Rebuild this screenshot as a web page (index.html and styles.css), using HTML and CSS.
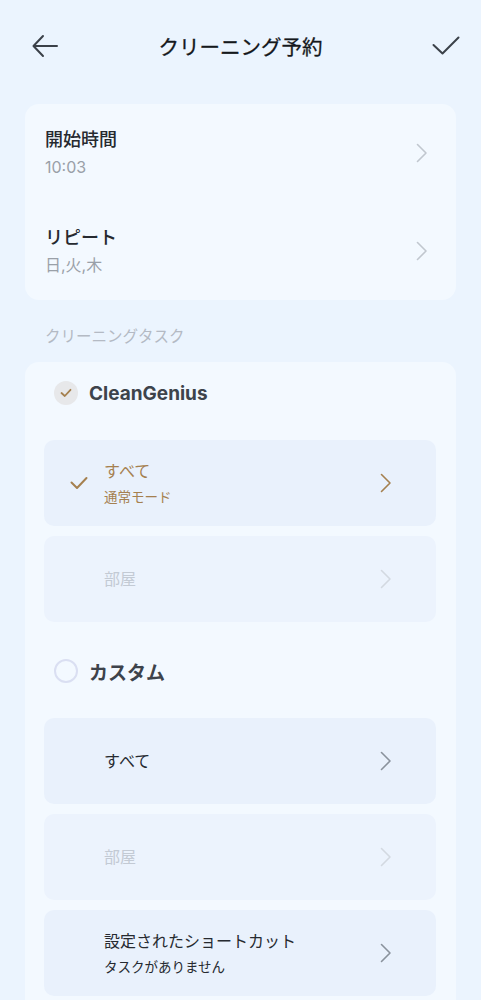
FILE: index.html
```html
<!DOCTYPE html>
<html lang="ja">
<head>
    <meta charset="UTF-8">
    <meta name="viewport" content="width=device-width, initial-scale=1.0">
    <title>クリーニング予約</title>
    <link rel="stylesheet" href="styles.css">
</head>
<body>

    <header class="topbar">
        <svg class="icon-back" width="26" height="24" viewBox="0 0 26 24">
            <path d="M25 12H2M11 2L1.5 12L11 22" fill="none" stroke="#3b4149" stroke-width="2" stroke-linecap="round" stroke-linejoin="round"/>
        </svg>
        <h1>クリーニング予約</h1>
        <svg class="icon-ok" width="28" height="20" viewBox="0 0 28 20">
            <path d="M1.5 9L10.5 17.5L26.5 1.5" fill="none" stroke="#3b4149" stroke-width="2" stroke-linecap="round" stroke-linejoin="round"/>
        </svg>
    </header>

    <!-- Horário e repetição -->
    <section class="card">
        <div class="row">
            <div class="row-text">
                <div class="row-title">開始時間</div>
                <div class="row-sub">10:03</div>
            </div>
            <svg class="chev" width="12" height="20" viewBox="0 0 12 20"><path d="M1.5 1.5L10 10L1.5 18.5" fill="none" stroke="#c1c7cf" stroke-width="1.6" stroke-linecap="round" stroke-linejoin="round"/></svg>
        </div>
        <div class="row">
            <div class="row-text">
                <div class="row-title">リピート</div>
                <div class="row-sub">日,火,木</div>
            </div>
            <svg class="chev" width="12" height="20" viewBox="0 0 12 20"><path d="M1.5 1.5L10 10L1.5 18.5" fill="none" stroke="#c1c7cf" stroke-width="1.6" stroke-linecap="round" stroke-linejoin="round"/></svg>
        </div>
    </section>

    <div class="section-label">クリーニングタスク</div>

    <!-- Tarefas -->
    <section class="card tasks">
        <div class="group-head">
            <span class="radio checked">
                <svg width="12" height="10" viewBox="0 0 12 10"><path d="M1.5 5L4.8 8L10.5 1.8" fill="none" stroke="#a5804f" stroke-width="1.8" stroke-linecap="round" stroke-linejoin="round"/></svg>
            </span>
            <span class="group-title">CleanGenius</span>
        </div>
        <div class="items">
            <div class="item selected">
                <span class="item-mark">
                    <svg width="18" height="14" viewBox="0 0 18 14"><path d="M1.5 6.5L7 12L16.5 2" fill="none" stroke="#a5804f" stroke-width="2" stroke-linecap="round" stroke-linejoin="round"/></svg>
                </span>
                <div class="item-text">
                    <div class="item-title">すべて</div>
                    <div class="item-sub">通常モード</div>
                </div>
                <svg class="chev" width="12" height="20" viewBox="0 0 12 20"><path d="M1.5 1.5L10 10L1.5 18.5" fill="none" stroke="#a5804f" stroke-width="1.6" stroke-linecap="round" stroke-linejoin="round"/></svg>
            </div>
            <div class="item disabled">
                <span class="item-mark"></span>
                <div class="item-text">
                    <div class="item-title">部屋</div>
                </div>
                <svg class="chev" width="12" height="20" viewBox="0 0 12 20"><path d="M1.5 1.5L10 10L1.5 18.5" fill="none" stroke="#d3d9e1" stroke-width="1.6" stroke-linecap="round" stroke-linejoin="round"/></svg>
            </div>
        </div>

        <div class="group-head">
            <span class="radio"></span>
            <span class="group-title">カスタム</span>
        </div>
        <div class="items">
            <div class="item">
                <span class="item-mark"></span>
                <div class="item-text">
                    <div class="item-title">すべて</div>
                </div>
                <svg class="chev" width="12" height="20" viewBox="0 0 12 20"><path d="M1.5 1.5L10 10L1.5 18.5" fill="none" stroke="#8a929c" stroke-width="1.6" stroke-linecap="round" stroke-linejoin="round"/></svg>
            </div>
            <div class="item disabled">
                <span class="item-mark"></span>
                <div class="item-text">
                    <div class="item-title">部屋</div>
                </div>
                <svg class="chev" width="12" height="20" viewBox="0 0 12 20"><path d="M1.5 1.5L10 10L1.5 18.5" fill="none" stroke="#d3d9e1" stroke-width="1.6" stroke-linecap="round" stroke-linejoin="round"/></svg>
            </div>
            <div class="item">
                <span class="item-mark"></span>
                <div class="item-text">
                    <div class="item-title">設定されたショートカット</div>
                    <div class="item-sub">タスクがありません</div>
                </div>
                <svg class="chev" width="12" height="20" viewBox="0 0 12 20"><path d="M1.5 1.5L10 10L1.5 18.5" fill="none" stroke="#8a929c" stroke-width="1.6" stroke-linecap="round" stroke-linejoin="round"/></svg>
            </div>
        </div>
    </section>

</body>
</html>
```

FILE: styles.css
```css
body {
    font-family: 'Inter', 'Noto Sans CJK JP', sans-serif;
    margin: 0;
    background: #ebf4fe;
    color: #262a30;
    height: 1000px;
    overflow: hidden;
}
.topbar {
    height: 92px;
    display: grid;
    grid-template-columns: 1fr auto 1fr;
    align-items: center;
    padding: 0 21px;
}
.topbar .icon-back {
    margin-left: 11px;
}
.topbar .icon-ok {
    justify-self: end;
}
.topbar h1 {
    margin: 0;
    font-size: 20.5px;
    font-weight: 400;
    color: #15181c;
    -webkit-text-stroke: 0.3px #15181c;
}
.card {
    background: #f3f9ff;
    border-radius: 14px;
    margin: 12px 25px 0 25px;
}
.row {
    height: 98px;
    display: flex;
    align-items: center;
    justify-content: space-between;
    padding: 0 28px 0 20px;
}
.row-title {
    font-size: 18px;
    font-weight: 500;
    line-height: 26px;
}
.row-sub {
    font-size: 16px;
    color: #9aa0a8;
    line-height: 24px;
    margin-top: 2px;
}
.section-label {
    font-size: 15.5px;
    color: #b4bac4;
    padding: 26px 45px 0;
    height: 36px;
    line-height: 22px;
}
.tasks {
    margin-top: 0;
    padding: 0 20px 20px 19px;
}
.group-head {
    height: 62px;
    display: flex;
    align-items: center;
    gap: 11px;
    padding-left: 10px;
    margin-bottom: 16px;
}
.items + .group-head {
    margin-top: 18px;
}
.radio {
    width: 24px;
    height: 24px;
    border-radius: 50%;
    border: 2px solid #dadff2;
    box-sizing: border-box;
    display: flex;
    align-items: center;
    justify-content: center;
}
.radio.checked {
    border: none;
    background: #e7e8ea;
}
.group-title {
    font-size: 19px;
    font-weight: 700;
    color: #3d434b;
}
.items {
    display: flex;
    flex-direction: column;
    gap: 10px;
}
.item {
    height: 86px;
    border-radius: 10px;
    background: #e9f1fc;
    display: flex;
    align-items: center;
    padding: 0 44px 0 26px;
}
.item-mark {
    width: 18px;
    height: 14px;
    margin-right: 16px;
    display: flex;
}
.item-text {
    flex: 1;
}
.item-title {
    font-size: 16px;
    line-height: 24px;
    color: #262a30;
}
.item-sub {
    font-size: 13.5px;
    line-height: 20px;
    margin-top: 4px;
    color: #262a30;
}
.item.selected .item-title,
.item.selected .item-sub {
    color: #a5804f;
}
.item.disabled {
    background: #ecf3fd;
}
.item.disabled .item-title {
    color: #c3cad4;
}
```
